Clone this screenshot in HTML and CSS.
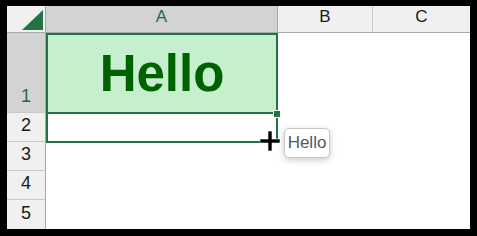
FILE: index.html
```html
<!DOCTYPE html>
<html>
<head>
<meta charset="utf-8">
<link rel="stylesheet" href="styles.css">
</head>
<body>
<div class="sheet">
  <div class="corner"><svg class="tri" width="21" height="20" viewBox="0 0 21 20"><polygon points="21,0 21,20 0,20" fill="#217346"/></svg></div>
  <div class="ch sel">A</div>
  <div class="ch">B</div>
  <div class="ch last">C</div>

  <div class="rh sel">1</div>
  <div class="cell good">Hello</div>
  <div class="cell"></div>
  <div class="cell"></div>

  <div class="rh">2</div>
  <div class="cell"></div>
  <div class="cell"></div>
  <div class="cell"></div>

  <div class="rh">3</div>
  <div class="cell"></div>
  <div class="cell"></div>
  <div class="cell"></div>

  <div class="rh">4</div>
  <div class="cell"></div>
  <div class="cell"></div>
  <div class="cell"></div>

  <div class="rh lastrow">5</div>
  <div class="cell"></div>
  <div class="cell"></div>
  <div class="cell"></div>

  <div class="sel-range"></div>
  <div class="sel-a1"></div>
  <div class="handle"></div>
  <svg class="cursor" width="20" height="20" viewBox="0 0 20 20">
    <path d="M8 0h4v8h8v4h-8v8h-4v-8h-8v-4h8z" fill="#000" stroke="#fff" stroke-width="0.6"/>
  </svg>
  <div class="tip">Hello</div>
</div>
</body>
</html>
```

FILE: styles.css
```css
html, body {
  margin: 0;
  background: #000;
}
body {
  padding: 6px 7px 7px 7px;
  width: 463px;
  height: 223px;
}
.sheet {
  position: relative;
  display: grid;
  grid-template-columns: 39px 232px 95px 97px;
  grid-template-rows: 27px 80px 29px 29px 29px 29px;
  width: 463px;
  height: 223px;
  background: #fff;
  font-family: "Liberation Sans", Arial, sans-serif;
  overflow: hidden;
}
.corner {
  background: #f0f0f0;
  border-right: 1px solid #a8a8a8;
  border-bottom: 1px solid #a8a8a8;
  box-sizing: border-box;
  display: flex;
  align-items: flex-start;
  justify-content: flex-end;
  padding: 4px 2px 0 0;
}
.ch {
  box-sizing: border-box;
  background: #f0f0f0;
  border-right: 1px solid #c8c8c8;
  border-bottom: 1px solid #a8a8a8;
  display: flex;
  align-items: flex-end;
  justify-content: center;
  padding-bottom: 5px;
  font-size: 17px;
  color: #1a1a1a;
}
.ch.last {
  border-right: none;
}
.ch.sel {
  background: #d3d3d3;
  color: #1e6b41;
  border-right-color: #a8a8a8;
}
.rh {
  box-sizing: border-box;
  background: #f0f0f0;
  border-right: 1px solid #a8a8a8;
  border-bottom: 1px solid #c8c8c8;
  display: flex;
  align-items: flex-end;
  justify-content: center;
  padding-bottom: 5px;
  font-size: 18px;
  color: #1a1a1a;
}
.rh.sel {
  background: #d3d3d3;
  color: #1e6b41;
}
.rh.lastrow {
  border-bottom: none;
}
.cell {
  background: #fff;
}
.cell.good {
  background: #c6efce;
  color: #006100;
  font-weight: bold;
  font-size: 51px;
  display: flex;
  align-items: center;
  justify-content: center;
}
.sel-a1 {
  position: absolute;
  left: 39px;
  top: 27px;
  width: 232px;
  height: 81px;
  box-sizing: border-box;
  border: 2px solid #217346;
}
.sel-range {
  position: absolute;
  left: 39px;
  top: 27px;
  width: 232px;
  height: 110px;
  box-sizing: border-box;
  border: 2px solid #217346;
}
.handle {
  position: absolute;
  left: 266px;
  top: 104px;
  width: 6px;
  height: 6px;
  background: #217346;
  border: 1px solid #fff;
}
.cursor {
  position: absolute;
  left: 253px;
  top: 125px;
}
.tip {
  position: absolute;
  left: 277px;
  top: 122px;
  width: 46px;
  height: 30px;
  box-sizing: border-box;
  border: 1px solid #c8c8c8;
  border-radius: 5px;
  background: #fff;
  box-shadow: 0 2px 6px rgba(0, 0, 0, 0.22);
  display: flex;
  align-items: center;
  justify-content: center;
  font-size: 17px;
  color: #4b5a6a;
}
```
